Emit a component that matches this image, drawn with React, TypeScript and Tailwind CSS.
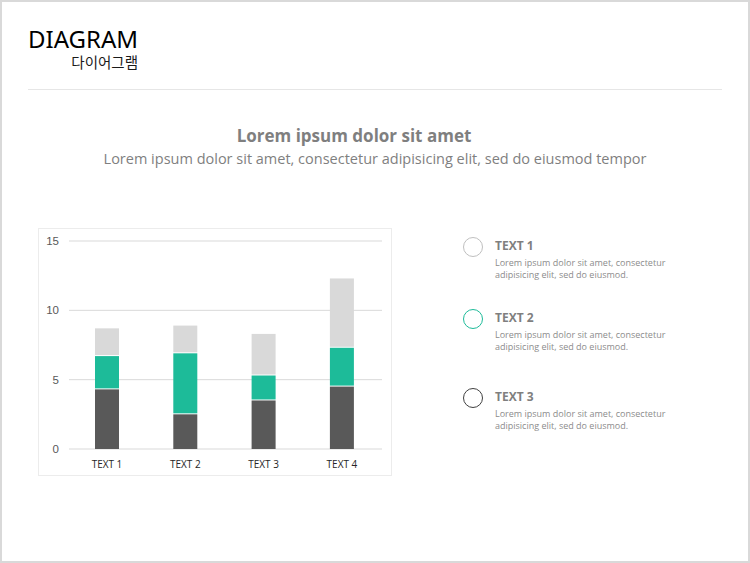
const bars = [
  { label: 'TEXT 1', dark: 4.3, green: 6.7, light: 8.7 },
  { label: 'TEXT 2', dark: 2.5, green: 6.9, light: 8.9 },
  { label: 'TEXT 3', dark: 3.5, green: 5.3, light: 8.3 },
  { label: 'TEXT 4', dark: 4.5, green: 7.3, light: 12.3 },
];

const legend = [
  { title: 'TEXT 1', ring: 'border-[#bfbfbf]', gap: 'mt-0' },
  { title: 'TEXT 2', ring: 'border-[#1dbb99]', gap: 'mt-[28px]' },
  { title: 'TEXT 3', ring: 'border-[#404040]', gap: 'mt-[35px]' },
];

const BASE = 220;
const UNIT = 208 / 15;
const y = (v: number) => BASE - v * UNIT;

const Chart = () => (
  <svg width="354" height="248" viewBox="0 0 354 248" className="block">
    {[0, 5, 10, 15].map((t) => (
      <g key={t}>
        <line x1="30" x2="343" y1={y(t)} y2={y(t)} stroke="#d9d9d9" strokeWidth="1" />
        <text
          x="20"
          y={y(t) + 4}
          textAnchor="end"
          fontSize="11.5"
          fill="#595959"
          fontFamily="'Liberation Sans', Arial, sans-serif"
        >
          {t}
        </text>
      </g>
    ))}
    {bars.map((b, i) => {
      const x = 56 + i * 78.3;
      return (
        <g key={b.label}>
          <rect x={x} y={y(b.dark)} width="24" height={b.dark * UNIT} fill="#595959" />
          <rect x={x} y={y(b.green)} width="24" height={(b.green - b.dark) * UNIT - 1} fill="#1dbb99" />
          <rect x={x} y={y(b.light)} width="24" height={(b.light - b.green) * UNIT - 1} fill="#d9d9d9" />
          <text
            x={x + 12}
            y="239"
            textAnchor="middle"
            fontSize="10"
            fill="#262626"
            fontFamily="'Open Sans', sans-serif"
          >
            {b.label}
          </text>
        </g>
      );
    })}
  </svg>
);

export default function App() {
  return (
    <div className="w-[750px] h-[563px] border-2 border-[#d9d9d9] bg-white font-['Open_Sans',sans-serif] overflow-hidden">
      {/* Header */}
      <div className="px-[26px] pt-[23px]">
        <div className="inline-flex flex-col items-end">
          <h1 className="text-[24px] leading-[28px] text-black font-['Noto_Sans',sans-serif]">DIAGRAM</h1>
          <p className="mt-[1px] text-[14.5px] leading-[16px] text-[#1a1a1a] font-['Noto_Sans_CJK_KR',sans-serif]">
            다이어그램
          </p>
        </div>
        <div className="mt-[19px] h-px bg-[#e6e6e6]" />
      </div>

      {/* Titles */}
      <div className="text-center mt-[34px]">
        <h2 className="pr-[42px] text-[17px] leading-[24px] font-bold text-[#7f7f7f]">
          Lorem ipsum dolor sit amet
        </h2>
        <p className="mt-px text-[14.5px] leading-[20px] text-[#7f7f7f]">
          Lorem ipsum dolor sit amet, consectetur adipisicing elit, sed do eiusmod tempor
        </p>
      </div>

      {/* Chart + legend */}
      <div className="mt-[59px] pl-[36px] flex">
        <div className="w-[354px] h-[248px] border border-[#ececec]">
          <Chart />
        </div>
        <div className="ml-[71px] mt-[9px] flex flex-col">
          {legend.map((l) => (
            <div key={l.title} className={`flex items-start ${l.gap}`}>
              <div className={`w-[20px] h-[20px] rounded-full border-[1.5px] ${l.ring} shrink-0`} />
              <div className="ml-[12px] pt-[2px]">
                <p className="text-[12px] leading-[14px] font-bold text-[#7f7f7f]">{l.title}</p>
                <p className="mt-[4px] text-[9px] leading-[12px] text-[#8c8c8c] w-[190px]">
                  Lorem ipsum dolor sit amet, consectetur
                  <br />
                  adipisicing elit, sed do eiusmod.
                </p>
              </div>
            </div>
          ))}
        </div>
      </div>
    </div>
  );
}
